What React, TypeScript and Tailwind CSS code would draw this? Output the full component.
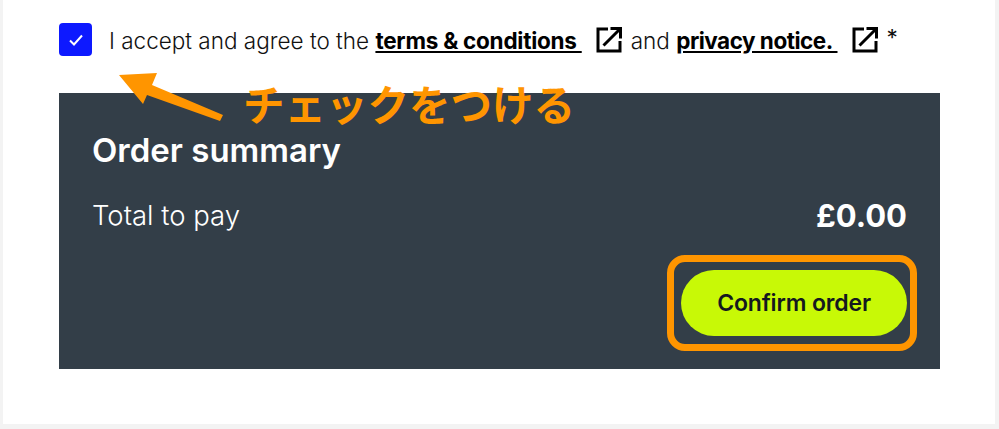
const Ext = () => (
  <svg width="28" height="28" viewBox="0 0 28 28" fill="none" stroke="#000" strokeWidth="3" className="shrink-0">
    <path d="M13 3H3v22h22V15" />
    <path d="M8.5 19.5 24.5 3.5M15.5 2.5h10v10" />
  </svg>
);

export default function App() {
  return (
    <div className="w-[999px] h-[429px] bg-[#f3f3f3] overflow-hidden" style={{ fontFamily: "Inter, 'Noto Sans CJK JP', sans-serif" }}>
      <div className="relative mx-[3px] w-[992px] h-[424px] bg-white px-[56px] pt-[23px]">
        <div className="flex items-center h-[33px]">
          <div className="w-[33px] h-[33px] rounded-[4px] bg-[#0d19ff] flex items-center justify-center shrink-0">
            <svg width="16" height="14" viewBox="0 0 16 14" fill="none" stroke="#fff" strokeWidth="2">
              <path d="M2 7.5 6 11.5 14 2.5" />
            </svg>
          </div>
          <div className="ml-[17px] flex items-center text-[22.5px] text-[#111] whitespace-nowrap">
            <span className="pt-[3px] font-light">I accept and agree to the&nbsp;</span>
            <a className="pt-[3px] font-bold tracking-[-0.25px] text-black underline">terms &amp; conditions&nbsp;</a>
            <span className="ml-[13px]"><Ext /></span>
            <span className="pt-[3px] ml-[8px] font-light">and&nbsp;</span>
            <a className="pt-[3px] font-bold tracking-[-0.5px] text-black underline">privacy notice.&nbsp;</a>
            <span className="ml-[13px]"><Ext /></span>
            <span className="ml-[8px] -mt-[3px]">*</span>
          </div>
        </div>

        <div className="mt-[37px] w-[881px] h-[276px] bg-[#333e48] px-[33px] pt-[37px] text-white">
          <h2 className="text-[33px] leading-[40px] font-semibold">Order summary</h2>
          <div className="mt-[26px] flex items-center justify-between h-[40px]">
            <span className="text-[27.5px] font-light">Total to pay</span>
            <span className="text-[31px] font-bold">£0.00</span>
          </div>
          <div className="mt-[34px] flex justify-end">
            <button className="w-[226px] h-[66px] rounded-full bg-[#c8f906] text-[#15191f] text-[23px] font-semibold tracking-[-0.15px]">
              Confirm order
            </button>
          </div>
        </div>

        {/* annotations */}
        <div className="absolute left-[664px] top-[255px] w-[250px] h-[96px] rounded-[18px] border-[7px] border-[#ff9500]" />
        <svg className="absolute left-[113px] top-[68px]" width="112" height="60" viewBox="0 0 112 60" fill="#ff9500">
          <path d="M3 7 41 5 36 17 107 47 104 53 31 27 27 36Z" />
        </svg>
        <div className="absolute left-[240px] top-[78px] text-[41.5px] leading-[56px] font-semibold text-[#ff9500] whitespace-nowrap">
          チェックをつける
        </div>
      </div>
    </div>
  );
}
